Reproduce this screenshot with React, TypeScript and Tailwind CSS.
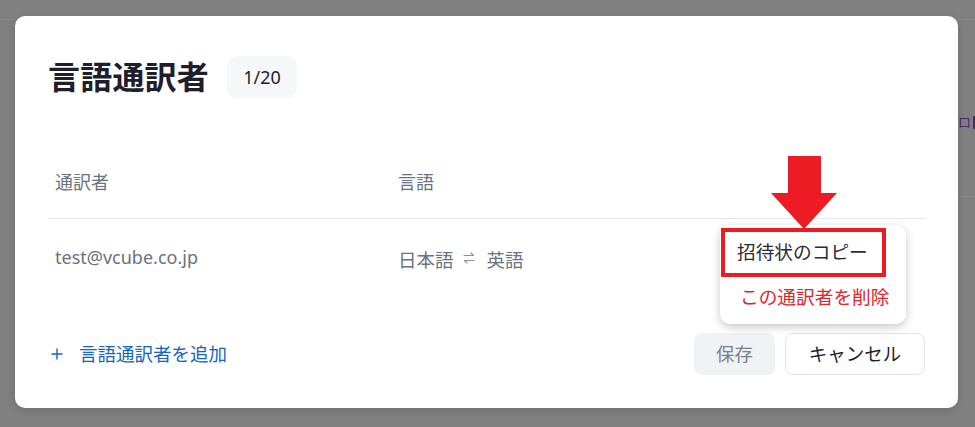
import React from "react";

const font = { fontFamily: '"Noto Sans", "Noto Sans CJK JP", sans-serif' };

function SwapIcon() {
  return (
    <svg width="14" height="12" viewBox="0 0 14 12" fill="none" stroke="#8a9099" strokeWidth="1.1" strokeLinecap="round" strokeLinejoin="round">
      <path d="M2 3.5h9.5M9 1l2.5 2.5" />
      <path d="M12 8.5H2.5M5 11L2.5 8.5" />
    </svg>
  );
}

function PlusIcon() {
  return (
    <svg width="12" height="12" viewBox="0 0 12 12" fill="none" stroke="#1565c0" strokeWidth="1.4">
      <path d="M6 0.5v11M0.5 6h11" />
    </svg>
  );
}

export default function App() {
  return (
    <div className="relative w-[975px] h-[427px] overflow-hidden bg-[#808080]" style={font}>
      {/* underlying page (dimmed) */}
      <div className="h-[20px] border-b border-[#8a8a8a]" />
      <div className="flex justify-end">
        <div className="w-[17px] h-[177px] border-b border-[#8a8a8a] flex items-start overflow-hidden pt-[96px]">
          <span className="text-[13px] leading-none text-[#4a2570]">ロ</span>
          <span className="ml-[2px] w-[2px] h-[13px] bg-[#4a2570]" />
        </div>
      </div>

      {/* modal */}
      <div className="absolute left-[15px] top-[16px] w-[943px] h-[392px] bg-white rounded-[10px] shadow-[0_2px_8px_rgba(0,0,0,0.15)] px-[33px] pt-[40px]">
        <div className="flex items-center h-[42px]">
          <h1 className="text-[32px] font-bold text-[#1e1e2d] leading-none tracking-[0.2px]">言語通訳者</h1>
          <div className="ml-[18px] w-[70px] h-[42px] rounded-[10px] bg-[#f6f7f9] flex items-center justify-center text-[18px] text-[#1e1e2d]">
            1/20
          </div>
        </div>

        <div className="mt-[72px] pb-[24px] border-b border-[#e7e7ee] grid grid-cols-[343px_1fr] text-[18px] leading-[24px] text-[#6b7280]">
          <div className="pl-[7px]">通訳者</div>
          <div className="pl-[7px]">言語</div>
        </div>

        <div className="pt-[29px] grid grid-cols-[343px_1fr] text-[18px] leading-[24px] text-[#6b7280]">
          <div className="pl-[7px] -mt-[3px]">test@vcube.co.jp</div>
          <div className="pl-[7px] flex items-center text-[18.5px]">
            <span>日本語</span>
            <span className="ml-[8px] mr-[11px] -mt-[4px] flex"><SwapIcon /></span>
            <span>英語</span>
          </div>
        </div>

        <div className="mt-[61px] h-[42px] flex items-center justify-between">
          <button className="flex items-center text-[#1565c0] text-[18.5px] leading-none">
            <span className="ml-[3px] mr-[16px] flex"><PlusIcon /></span>
            <span>言語通訳者を追加</span>
          </button>
          <div className="flex items-center gap-[10px]">
            <button className="w-[81px] h-[42px] rounded-[8px] bg-[#f0f3f6] text-[18.5px] text-[#7b8089]">保存</button>
            <button className="w-[140px] h-[42px] rounded-[8px] bg-white border border-[#e2e4e8] text-[18.5px] text-[#1e1e2d]">キャンセル</button>
          </div>
        </div>

        {/* dropdown menu */}
        <div className="absolute left-[705px] top-[209px] w-[186px] h-[99px] bg-white rounded-[10px] shadow-[0_3px_10px_rgba(0,0,0,0.22)] pt-[3px] pl-[1px] flex flex-col">
          <div className="w-[165px] h-[49px] border-[4px] border-[#ed1c24] flex items-center pl-[12px] text-[18.7px] text-[#2b2b33] whitespace-nowrap">
            招待状のコピー
          </div>
          <div className="h-[40px] flex items-center pl-[19px] text-[18.7px] text-[#e0262b] whitespace-nowrap">
            この通訳者を削除
          </div>
        </div>
      </div>

      {/* annotation arrow */}
      <svg className="absolute left-[771px] top-[156px]" width="66" height="73" viewBox="0 0 66 73">
        <polygon points="17,0 50,0 50,37 66,37 33,73 0,37 17,37" fill="#ed1c24" />
      </svg>
    </div>
  );
}
